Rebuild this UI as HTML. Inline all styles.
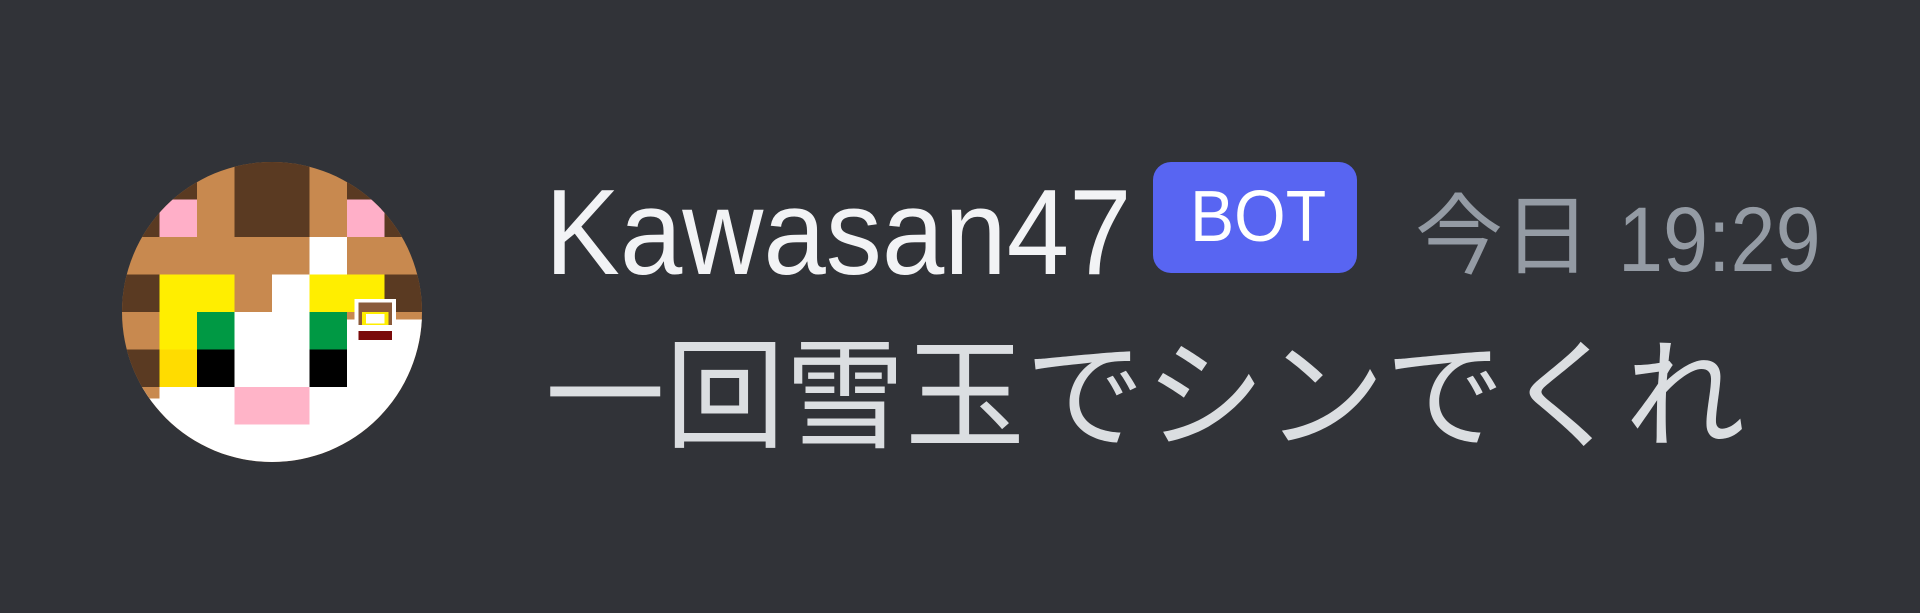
<!DOCTYPE html>
<html><head><meta charset="utf-8"><style>
html,body{margin:0;padding:0;}
body{width:1920px;height:613px;background:#313338;position:relative;overflow:hidden;font-family:"Liberation Sans","Noto Sans CJK JP",sans-serif;}
.a{position:absolute;white-space:nowrap;line-height:1;transform-origin:0 0;}
</style></head><body>
<svg class="a" style="left:122px;top:162px" width="300" height="300" viewBox="0 0 8 8" shape-rendering="crispEdges">
<defs><clipPath id="c"><circle cx="4" cy="4" r="4"/></clipPath></defs>
<g clip-path="url(#c)">
<rect width="8" height="8" fill="#c8894f"/>
<rect x="0" y="0" width="2" height="1" fill="#5a3a22"/>
<rect x="3" y="0" width="2" height="2" fill="#5a3a22"/>
<rect x="6" y="0" width="2" height="1" fill="#5a3a22"/>
<rect x="0" y="1" width="1" height="1" fill="#5a3a22"/>
<rect x="7" y="1" width="1" height="1" fill="#5a3a22"/>
<rect x="1" y="1" width="1" height="1" fill="#ffafc8"/>
<rect x="6" y="1" width="1" height="1" fill="#ffafc8"/>
<rect x="5" y="2" width="1" height="1" fill="#ffffff"/>
<rect x="0" y="3" width="1" height="1" fill="#5a3a22"/>
<rect x="7" y="3" width="1" height="1" fill="#5a3a22"/>
<rect x="1" y="3" width="2" height="1" fill="#ffee00"/>
<rect x="5" y="3" width="2" height="1" fill="#ffee00"/>
<rect x="4" y="3" width="1" height="1" fill="#ffffff"/>
<rect x="1" y="4" width="1" height="1" fill="#ffee00"/>
<rect x="1" y="5" width="1" height="1" fill="#ffdc00"/>
<rect x="2" y="4" width="1" height="1" fill="#009944"/>
<rect x="5" y="4" width="1" height="1" fill="#009944"/>
<rect x="3" y="4" width="2" height="2" fill="#ffffff"/>
<rect x="0" y="5" width="1" height="1" fill="#5a3a22"/>
<rect x="2" y="5" width="1" height="1" fill="#000"/>
<rect x="5" y="5" width="1" height="1" fill="#000"/>
<rect x="6" y="4.2" width="2" height="1.8" fill="#ffffff"/>
<rect x="0" y="6" width="8" height="2" fill="#ffffff"/>
<rect x="0" y="6" width="1" height="0.3" fill="#c8894f"/>
<rect x="3" y="6" width="2" height="1" fill="#ffb4c8"/>
</g>
<rect x="6.2" y="3.65" width="1.1" height="1.1" fill="#fff"/>
<rect x="6.3" y="3.75" width="0.9" height="0.6" fill="#8a5a3a"/>
<rect x="6.4" y="4.0" width="0.7" height="0.35" fill="#ffee00"/>
<rect x="6.5" y="4.05" width="0.5" height="0.25" fill="#fff"/>
<rect x="6.3" y="4.5" width="0.9" height="0.25" fill="#7a0a0a"/>
</svg>
<div class="a" style="left:545px;top:171px;font-size:122px;color:#f2f3f5;transform:scaleX(0.92);">Kawasan47</div>
<div class="a" style="left:1153px;top:162px;width:204px;height:111px;background:#5865f2;border-radius:18px;"></div>
<div class="a" style="left:1190px;top:181px;font-size:72px;color:#fff;transform:scaleX(0.92);">BOT</div>
<div class="a" style="left:1415px;top:186px;font-size:88px;color:#949ba4;font-family:'Noto Sans CJK JP',sans-serif;">今日</div>
<div class="a" style="left:1618px;top:194px;font-size:92px;color:#949ba4;transform:scaleX(0.88);">19:29</div>
<div class="a" style="left:545px;top:326px;font-size:120px;color:#dbdee1;font-family:'Noto Sans CJK JP',sans-serif;font-weight:400;">一回雪玉でシンでくれ</div>
</body></html>
